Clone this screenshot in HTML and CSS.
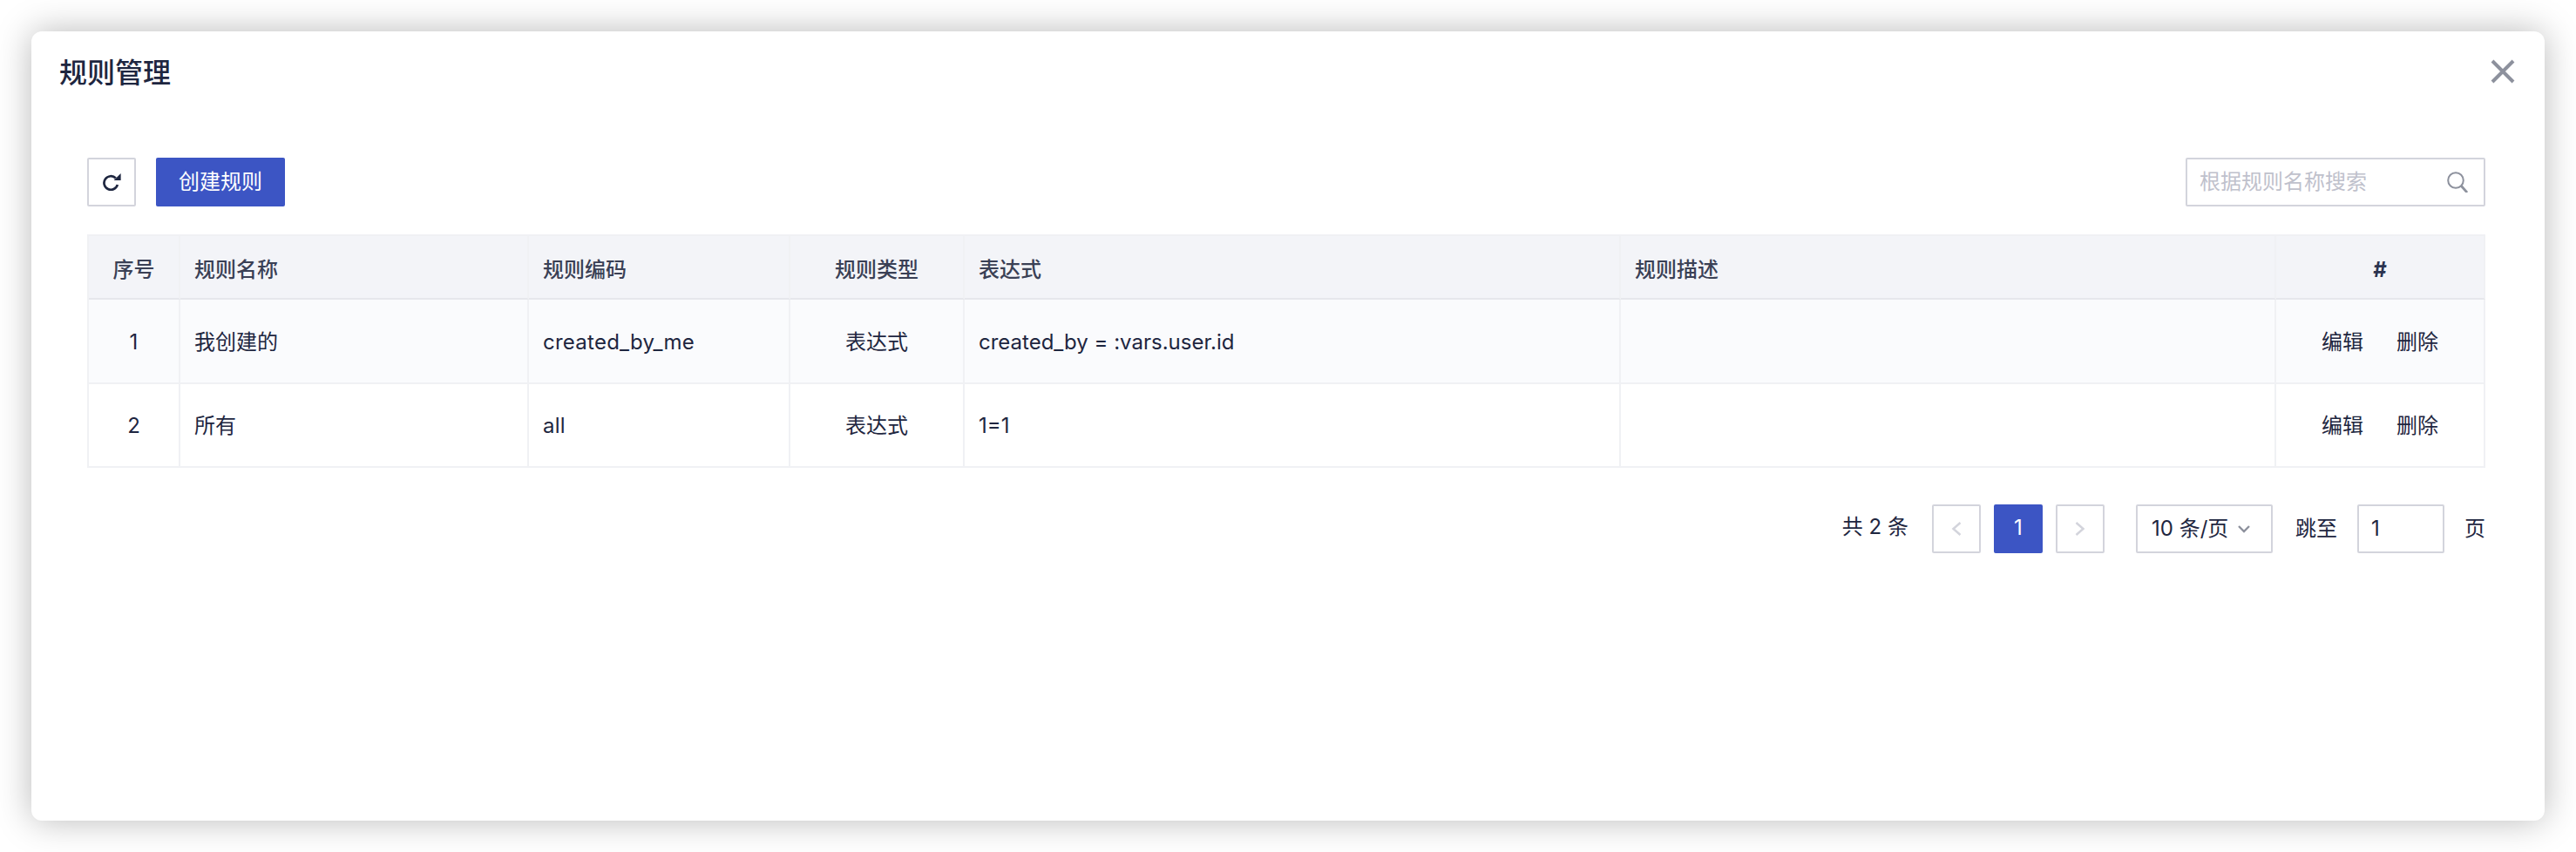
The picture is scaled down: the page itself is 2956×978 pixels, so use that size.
FILE: index.html
```html
<!DOCTYPE html>
<html lang="zh-CN">
<head>
<meta charset="utf-8">
<title>规则管理</title>
<link rel="stylesheet" href="styles.css">
</head>
<body>
<div class="modal">
  <header class="modal-header">
    <h1 class="modal-title">规则管理</h1>
    <button class="close" aria-label="关闭">
      <svg viewBox="0 0 28 28" width="28" height="28"><path d="M2 2 L26 26 M26 2 L2 26" fill="none" stroke="#8d919d" stroke-width="4"/></svg>
    </button>
  </header>
  <main class="modal-body">
    <div class="toolbar">
      <div class="toolbar-left">
        <button class="btn-icon" aria-label="刷新">
          <svg viewBox="0 0 21 20" width="21" height="20"><path d="M14.8 5.5 A7.8 7.8 0 1 0 16.8 13" fill="none" stroke="#1e2640" stroke-width="2.7"/><path d="M20.6 0 V8 H12.6 Z" fill="#1e2640"/></svg>
        </button>
        <button class="btn-primary">创建规则</button>
      </div>
      <div class="search">
        <span class="search-placeholder">根据规则名称搜索</span>
        <svg viewBox="0 0 24 24" width="24" height="24"><circle cx="10" cy="10" r="8.8" fill="none" stroke="#8d919d" stroke-width="2"/><path d="M16 16 L23 24" stroke="#8d919d" stroke-width="2.8" fill="none"/></svg>
      </div>
    </div>
    <table class="grid">
      <colgroup>
        <col class="c-no"><col class="c-name"><col class="c-code"><col class="c-type"><col class="c-expr"><col class="c-desc"><col class="c-op">
      </colgroup>
      <thead>
        <tr>
          <th class="center">序号</th>
          <th>规则名称</th>
          <th>规则编码</th>
          <th class="center">规则类型</th>
          <th>表达式</th>
          <th>规则描述</th>
          <th class="center hash">#</th>
        </tr>
      </thead>
      <tbody>
        <tr class="odd">
          <td class="center">1</td>
          <td>我创建的</td>
          <td class="code">created_by_me</td>
          <td class="center">表达式</td>
          <td>created_by = :vars.user.id</td>
          <td></td>
          <td class="center"><span class="ops"><a>编辑</a><a>删除</a></span></td>
        </tr>
        <tr>
          <td class="center">2</td>
          <td>所有</td>
          <td class="code">all</td>
          <td class="center">表达式</td>
          <td>1=1</td>
          <td></td>
          <td class="center"><span class="ops"><a>编辑</a><a>删除</a></span></td>
        </tr>
      </tbody>
    </table>
    <nav class="pager">
      <span class="total">共 2 条</span>
      <span class="page">
        <svg viewBox="0 0 12 18" width="12" height="18"><path d="M10.5 2 L2.5 9 L10.5 16" fill="none" stroke="#d3d4dc" stroke-width="2.5"/></svg>
      </span>
      <span class="page current">1</span>
      <span class="page">
        <svg viewBox="0 0 12 18" width="12" height="18"><path d="M1.5 2 L9.5 9 L1.5 16" fill="none" stroke="#d3d4dc" stroke-width="2.5"/></svg>
      </span>
      <span class="size">10 条/页
        <svg viewBox="0 0 14 9" width="14" height="9"><path d="M1 1 L7 7 L13 1" fill="none" stroke="#8d919d" stroke-width="2.4"/></svg>
      </span>
      <span class="jump">跳至</span>
      <span class="jump-input">1</span>
      <span class="unit">页</span>
    </nav>
  </main>
</div>
</body>
</html>
```
FILE: styles.css
```css
* { box-sizing: border-box; }
html, body { margin: 0; height: 100%; background: #fff; }
body {
  padding: 36px;
  font-family: Inter, "Noto Sans CJK SC", sans-serif;
  font-size: 24px;
  line-height: 32px;
  color: #1e2640;
  overflow: hidden;
}
.modal {
  height: 906px;
  background: #fff;
  border-radius: 12px;
  box-shadow: 0 0 40px rgba(0, 0, 0, .28);
}
.modal-header {
  height: 81px;
  padding: 32px 34px 0 32px;
  display: flex;
  justify-content: space-between;
  align-items: flex-start;
}
.modal-title {
  margin: 0;
  font-size: 32px;
  line-height: 32px;
  font-weight: 500;
}
.close {
  padding: 0;
  border: 0;
  background: none;
  width: 28px;
  height: 28px;
}
.close svg { display: block; }
.modal-body { padding: 64px 68px 0 64px; }
.toolbar {
  display: flex;
  justify-content: space-between;
  margin-bottom: 32px;
}
.toolbar-left { display: flex; gap: 23px; }
.btn-icon {
  width: 56px;
  height: 56px;
  padding: 0;
  display: flex;
  align-items: center;
  justify-content: center;
  background: #fff;
  border: 2px solid #d3d4dc;
  border-radius: 2px;
}
.btn-primary {
  width: 148px;
  height: 56px;
  padding: 0;
  border: 0;
  border-radius: 2px;
  background: #3c55c4;
  color: #fff;
  font: inherit;
}
.search {
  width: 344px;
  height: 56px;
  padding: 0 18px 0 14px;
  display: flex;
  align-items: center;
  justify-content: space-between;
  border: 2px solid #d3d4dc;
  border-radius: 2px;
}
.search-placeholder { color: #bfc1cc; }
.grid {
  width: 2752px;
  table-layout: fixed;
  border-collapse: separate;
  border-spacing: 0;
  border-top: 2px solid #f0f1f4;
  border-left: 2px solid #f0f1f4;
}
.c-no { width: 105px; }
.c-name { width: 400px; }
.c-code { width: 300px; }
.c-type { width: 200px; }
.c-expr { width: 753px; }
.c-desc { width: 752px; }
.c-op { width: 240px; }
th, td {
  padding: 0 16px;
  text-align: left;
  border-right: 2px solid #f0f1f4;
  border-bottom: 2px solid #f0f1f4;
}
th {
  height: 73px;
  padding-top: 6px;
  background: #f3f4f8;
  font-weight: 500;
  color: #3a4055;
  border-bottom-color: #e6e7ec;
}
td { height: 96px; padding-top: 2px; }
.odd td { height: 97px; background: #fafbfd; }
th.center, td.center { text-align: center; }
.hash { font-weight: 700; color: #2b3350; }
.code { letter-spacing: .25px; }
.ops { display: inline-flex; gap: 38px; }
.pager {
  margin-top: 42px;
  display: flex;
  align-items: center;
  justify-content: flex-end;
}
.total { margin-right: 27px; margin-bottom: 4px; }
.page {
  width: 56px;
  height: 56px;
  margin-right: 15px;
  display: flex;
  align-items: center;
  justify-content: center;
  border: 2px solid #d3d4dc;
  border-radius: 2px;
}
.current {
  padding-bottom: 2px;
  background: #3c55c4;
  border-color: #3c55c4;
  color: #fff;
}
.size {
  width: 157px;
  height: 56px;
  margin-left: 21px;
  margin-right: 26px;
  padding: 0 24px 0 16px;
  display: flex;
  align-items: center;
  justify-content: space-between;
  border: 2px solid #d3d4dc;
  border-radius: 2px;
}
.jump { margin-right: 23px; }
.jump-input {
  width: 100px;
  height: 56px;
  padding: 0 14px;
  margin-right: 23px;
  display: flex;
  align-items: center;
  border: 2px solid #d3d4dc;
  border-radius: 2px;
}
```
